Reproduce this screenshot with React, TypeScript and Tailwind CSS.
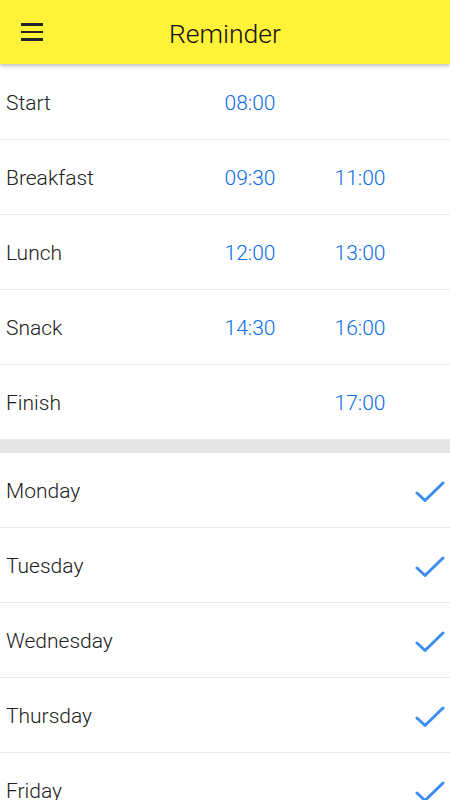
import React from "react";

const meals: { label: string; a?: string; b?: string }[] = [
  { label: "Start", a: "08:00" },
  { label: "Breakfast", a: "09:30", b: "11:00" },
  { label: "Lunch", a: "12:00", b: "13:00" },
  { label: "Snack", a: "14:30", b: "16:00" },
  { label: "Finish", b: "17:00" },
];

const days = ["Monday", "Tuesday", "Wednesday", "Thursday", "Friday", "Saturday", "Sunday"];

const Check = () => (
  <svg width="30" height="24" viewBox="0 0 30 24" fill="none">
    <path d="M2 13 L10 20.5 L28 3" stroke="#3b8ef0" strokeWidth="3" strokeLinecap="round" strokeLinejoin="round" />
  </svg>
);

const App = () => {
  return (
    <div className="w-[450px] h-[800px] overflow-hidden bg-white font-['Roboto',sans-serif] font-light text-[#212121]">
      <header className="relative z-10 h-[64px] bg-[#fff238] shadow-[0_2px_4px_rgba(0,0,0,0.25)] flex items-center">
        <button className="absolute left-[21px] top-[23px] flex flex-col gap-[5px]">
          <span className="block w-[22px] h-[2.5px] bg-[#222]" />
          <span className="block w-[22px] h-[2.5px] bg-[#222]" />
          <span className="block w-[22px] h-[2.5px] bg-[#222]" />
        </button>
        <h1 className="w-full text-center text-[26.5px] pt-[3px] font-light text-[#111]">Reminder</h1>
      </header>

      <div className="pt-[1px]">
        {meals.map((m) => (
          <div
            key={m.label}
            className="h-[75px] pt-[4px] grid grid-cols-[195px_110px_110px_1fr] items-center border-b border-[#ececec] text-[21px]"
          >
            <span className="pl-[6px]">{m.label}</span>
            <span className="text-center text-[#0a6de6]">{m.a ?? ""}</span>
            <span className="text-center text-[#0a6de6]">{m.b ?? ""}</span>
            <span />
          </div>
        ))}
      </div>

      <div className="h-[13px] bg-[#e5e5e5]" />

      <div>
        {days.map((d) => (
          <div key={d} className="h-[75px] pt-[4px] flex items-center justify-between border-b border-[#ececec] text-[21px]">
            <span className="pl-[6px]">{d}</span>
            <span className="pr-[5px]">
              <Check />
            </span>
          </div>
        ))}
      </div>
    </div>
  );
};

export default App;
